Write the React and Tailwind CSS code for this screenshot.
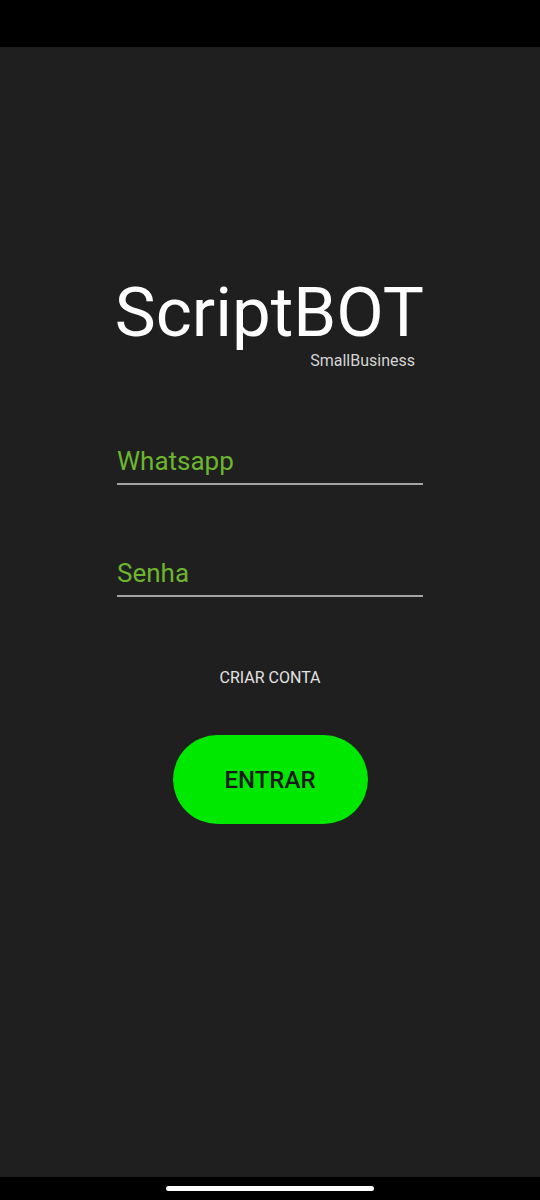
import React from 'react';

const Field = ({ label }) => (
  <div className="w-[306px] border-b-2 border-[#a4a4a4] pb-[6px]">
    <span className="text-[26px] leading-[32px] text-[#6cb52f]">{label}</span>
  </div>
);

export default function App() {
  return (
    <div className="w-[540px] h-[1200px] flex flex-col bg-[#1f1f1f] font-['Roboto',sans-serif]">
      <div className="h-[47px] bg-black" />

      <div className="flex-1 flex flex-col items-center">
        <div className="mt-[229px] flex flex-col items-end w-[308px]">
          <h1 className="text-[69px] leading-[74px] text-white">ScriptBOT</h1>
          <span className="mr-[9px] mt-[1px] text-[16px] leading-[20px] text-[#d4d4d4]">SmallBusiness</span>
        </div>

        <div className="mt-[74px] flex flex-col gap-[72px]">
          <Field label="Whatsapp" />
          <Field label="Senha" />
        </div>

        <button className="mt-[71px] text-[16px] leading-[20px] text-[#e2e2e2]">CRIAR CONTA</button>

        <button className="mt-[47px] w-[195px] h-[89px] rounded-full bg-[#00e800] text-[24px] font-medium text-[#1a1a1a]">
          ENTRAR
        </button>
      </div>

      <div className="h-[23px] bg-black flex justify-center items-start pt-[9px]">
        <div className="w-[208px] h-[5px] rounded-full bg-white" />
      </div>
    </div>
  );
}
